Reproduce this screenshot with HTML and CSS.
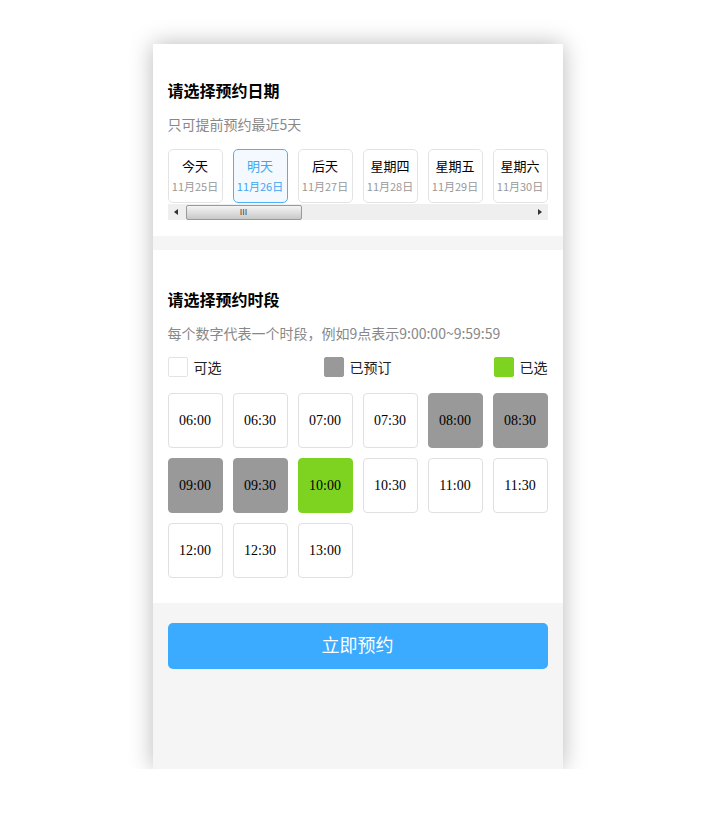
FILE: index.html
```html
<!DOCTYPE html>
<html lang="zh-CN">
<head>
  <meta charset="UTF-8" />
  <meta name="viewport" content="width=device-width, initial-scale=1.0"/>
  <title>预约</title>
  <link rel="stylesheet" href="styles.css">
</head>
<body>
  <div class="phone">
    <div class="section date-section">
      <h3>请选择预约日期</h3>
      <p class="tip">只可提前预约最近5天</p>
      <div class="date-list">
        <div class="date-item"><span class="day">今天</span><span class="date">11月25日</span></div>
        <div class="date-item active"><span class="day">明天</span><span class="date">11月26日</span></div>
        <div class="date-item"><span class="day">后天</span><span class="date">11月27日</span></div>
        <div class="date-item"><span class="day">星期四</span><span class="date">11月28日</span></div>
        <div class="date-item"><span class="day">星期五</span><span class="date">11月29日</span></div>
        <div class="date-item"><span class="day">星期六</span><span class="date">11月30日</span></div>
      </div>
      <div class="scrollbar">
        <span class="arrow left"></span>
        <span class="thumb">III</span>
        <span class="arrow right"></span>
      </div>
    </div>

    <div class="section time-section">
      <h3>请选择预约时段</h3>
      <p class="tip">每个数字代表一个时段，例如9点表示9:00:00~9:59:59</p>
      <div class="legend">
        <span class="legend-item"><i class="box"></i>可选</span>
        <span class="legend-item"><i class="box booked"></i>已预订</span>
        <span class="legend-item"><i class="box picked"></i>已选</span>
      </div>
      <div class="time-grid">
        <div class="time">06:00</div>
        <div class="time">06:30</div>
        <div class="time">07:00</div>
        <div class="time">07:30</div>
        <div class="time booked">08:00</div>
        <div class="time booked">08:30</div>
        <div class="time booked">09:00</div>
        <div class="time booked">09:30</div>
        <div class="time picked">10:00</div>
        <div class="time">10:30</div>
        <div class="time">11:00</div>
        <div class="time">11:30</div>
        <div class="time">12:00</div>
        <div class="time">12:30</div>
        <div class="time">13:00</div>
      </div>
    </div>

    <div class="footer">
      <button class="submit">立即预约</button>
    </div>
  </div>
</body>
</html>
```

FILE: styles.css
```css
body {
  margin: 0;
  background: #fff;
  font-family: "Noto Sans CJK SC", "Noto Sans", sans-serif;
  color: #000;
}
.phone {
  width: 410px;
  min-height: 725px;
  margin: 44px auto 0;
  background: #f5f5f5;
  box-shadow: 0 0 22px rgba(0,0,0,0.28);
  display: flex;
  flex-direction: column;
}
.section {
  background: #fff;
  padding: 34px 15px 16px;
}
.time-section {
  margin-top: 14px;
  padding: 37px 15px 25px;
}
h3 {
  margin: 0;
  font-size: 16px;
  line-height: 24px;
  font-weight: bold;
}
.tip {
  margin: 12px 0 0;
  font-size: 14px;
  line-height: 20px;
  color: #888;
}
.date-list {
  margin-top: 15px;
  display: flex;
  gap: 10px;
  overflow: hidden;
}
.date-item {
  flex: 0 0 55px;
  height: 54px;
  box-sizing: border-box;
  border: 1px solid #e3e3e3;
  border-radius: 5px;
  display: flex;
  flex-direction: column;
  align-items: center;
  padding-top: 7px;
}
.date-item .day {
  font-size: 13px;
  line-height: 18px;
  color: #000;
}
.date-item .date {
  margin-top: 2px;
  font-size: 11px;
  line-height: 18px;
  color: #999;
  white-space: nowrap;
}
.date-item.active {
  border-color: #4db1f3;
  background: #f3f9ff;
}
.date-item.active .day,
.date-item.active .date {
  color: #3ea6f0;
}
.scrollbar {
  margin-top: 1px;
  height: 16px;
  background: #efefef;
  display: flex;
  align-items: center;
}
.arrow {
  width: 0;
  height: 0;
  border-top: 3px solid transparent;
  border-bottom: 3px solid transparent;
}
.arrow.left {
  margin-left: 6px;
  border-right: 4px solid #333;
}
.arrow.right {
  margin-left: auto;
  margin-right: 6px;
  border-left: 4px solid #333;
}
.thumb {
  margin-left: 8px;
  width: 116px;
  height: 15px;
  box-sizing: border-box;
  border: 1px solid #999;
  border-radius: 2px;
  background: linear-gradient(#f4f4f4, #dcdcdc 55%, #c8c8c8);
  font-family: "Liberation Sans", sans-serif;
  font-size: 9px;
  line-height: 13px;
  text-align: center;
  color: #444;
}
.legend {
  margin-top: 14px;
  display: flex;
  justify-content: space-between;
}
.legend-item {
  display: flex;
  align-items: center;
  font-size: 14px;
  line-height: 20px;
  color: #222;
}
.box {
  width: 20px;
  height: 20px;
  box-sizing: border-box;
  border: 1px solid #e3e3e3;
  border-radius: 2px;
  margin-right: 6px;
  background: #fff;
}
.box.booked {
  background: #999;
  border-color: #999;
}
.box.picked {
  background: #7ed321;
  border-color: #7ed321;
}
.time-grid {
  margin-top: 16px;
  display: grid;
  grid-template-columns: repeat(6, 55px);
  gap: 10px;
}
.time {
  height: 55px;
  box-sizing: border-box;
  border: 1px solid #e0e0e0;
  border-radius: 4px;
  display: flex;
  align-items: center;
  justify-content: center;
  font-family: "Liberation Serif", serif;
  font-size: 14px;
  color: #000;
}
.time.booked {
  background: #999;
  border-color: #999;
}
.time.picked {
  background: #7ed321;
  border-color: #7ed321;
}
.footer {
  flex: 1;
  padding: 20px 15px;
}
.submit {
  width: 100%;
  height: 46px;
  border: none;
  border-radius: 5px;
  background: #3aabff;
  color: #fff;
  font-family: "Noto Sans CJK SC", sans-serif;
  font-size: 18px;
  line-height: 42px;
  padding: 0 0 4px;
  cursor: pointer;
}
```
